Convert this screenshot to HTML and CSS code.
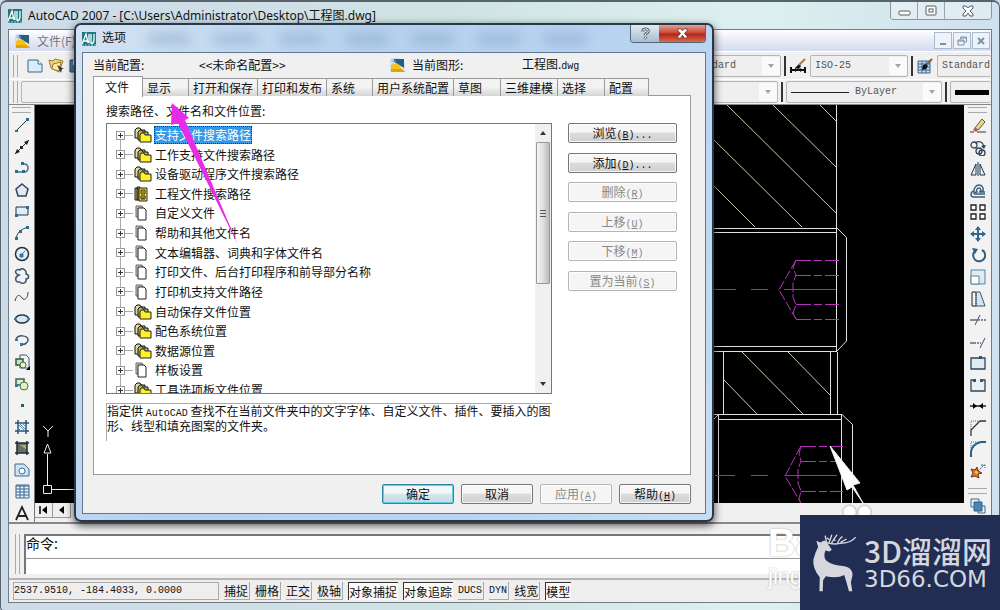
FILE: index.html
```html
<!DOCTYPE html>
<html lang="zh-CN">
<head>
<meta charset="utf-8">
<meta name="viewport" content="width=device-width, initial-scale=1">
<title>AutoCAD 2007 - 工程图.dwg</title>
<link rel="stylesheet" href="styles.css">
</head>
<body>
<svg class="sprites" aria-hidden="true">
  <defs>
    <symbol id="app" viewBox="0 0 14 14"><rect width="14" height="14" fill="#1d7a80"/><path d="M0 12 4 2l2 9M1 9h5M7 2v9M9 2v10M12 2v6q0 3-3 4" fill="none" stroke="#fff" stroke-width="1.3"/><path d="M0 13h14" stroke="#8fd3d0" stroke-dasharray="2 1"/></symbol>
    <symbol id="dwg" viewBox="0 0 16 16"><path d="M1 2h8l5 4v8H1z" fill="#fff" stroke="#a8b4bd" stroke-width=".6"/><path d="M4 2h10v9L4 5z" fill="#265f83"/><path d="M1 8q6-4 9 1l5 6H1z" fill="#f4c21a"/><path d="M1 12h10l4 3H1z" fill="#e2a400"/><path d="M3 2v5M1 4h5" stroke="#78b8dc"/></symbol>
    <symbol id="folders" viewBox="0 0 18 16"><path d="M1 11V3l2-2h3l1 2h4v8z" fill="#dedb9c" stroke="#111"/><path d="M4 13V5l2-2h2l1 2h5v8z" fill="#bdb75b" stroke="#111"/><path d="M6 15V8l1-2h3l1 2h6v7z" fill="#fff02c" stroke="#222"/></symbol>
    <symbol id="pages" viewBox="0 0 18 16"><path d="M2 12V1h6l1 2v9z" fill="#ccc" stroke="#666"/><path d="M4 15V3h6l2 2v10z" fill="#fff" stroke="#222"/></symbol>
    <symbol id="cabinet" viewBox="0 0 18 16"><path d="M1 2h3v12H1zM3 1h3v13H3z" fill="#c9b837" stroke="#222"/><path d="M5 2h8v13H5z" fill="#f7e43c" stroke="#222"/><path d="M7 4h4v4H7zm0 6h4v3H7zM8 6h2m-2 6h2" fill="none" stroke="#222"/></symbol>
    <symbol id="down" viewBox="0 0 8 6"><path d="M1 1h6L4 5z" fill="#a4a4a4"/></symbol>
  </defs>
</svg>

<main class="window">
  <header class="titlebar">
    <svg class="i14"><use href="#app"/></svg>
    <h1>AutoCAD 2007 - [C:\Users\Administrator\Desktop\工程图.dwg]</h1>
    <div class="caption-buttons">
      <button aria-label="最小化"><svg viewBox="0 0 14 12"><rect x="2" y="6" width="11" height="4" rx="1" fill="#fff" stroke="#565d62"/></svg></button>
      <button aria-label="还原"><svg viewBox="0 0 14 12"><rect x="2" y="1" width="10" height="9" rx="1" fill="#fff" stroke="#565d62"/><rect x="5" y="4" width="4" height="3" fill="#fff" stroke="#565d62"/></svg></button>
      <button class="wide" aria-label="关闭"><svg viewBox="0 0 14 12"><path d="M2 1h3l2 2 2-2h3v2L9 6l3 3v2H9L7 8l-2 3H2V9l3-3-3-3z" fill="#fff" stroke="#565d62"/></svg></button>
    </div>
  </header>

  <div class="client">
    <nav class="menubar">
      <svg class="i16"><use href="#dwg"/></svg>
      <a href="#file">文件(F)</a>
      <div class="doc-buttons">
        <button aria-label="最小化图形"><svg viewBox="0 0 12 12"><path d="M3 9h6" stroke="#7c92a8" stroke-width="2"/></svg></button>
        <button aria-label="还原图形"><svg viewBox="0 0 12 12"><path d="M4.500 4V2h6v5H8M2 5h6v5H2zM2 6h6M5 3h5" fill="none" stroke="#7c92a8"/></svg></button>
        <button aria-label="关闭图形"><svg viewBox="0 0 12 12"><path d="m3 3 6 6m0-6L3 9" stroke="#7c92a8" stroke-width="2"/></svg></button>
      </div>
    </nav>

    <div class="toolbar first">
      <span class="grip"></span>
      <button class="tool" aria-label="新建"><svg viewBox="0 0 16 16"><path d="M1 2h10l4 4v8H1z" fill="#d7edf8" stroke="#406682"/><path d="M11 2v4h4" fill="#fff" stroke="#406682"/></svg></button>
      <button class="tool" aria-label="打开"><svg viewBox="0 0 16 16"><path d="m1 2 4 1 2-2 8 2-4 11-8-4z" fill="#f3d37a" stroke="#9b7a2c"/><path d="m5 6 8-2-2 9-7-2z" fill="#ffe9a6" stroke="#9b7a2c"/><path d="m9 7 4 8 1-4 2 0z" fill="#334"/></svg></button>
      <button class="tool" aria-label="保存"><svg viewBox="0 0 16 16"><path d="M1 2h13v12H1z" fill="#4f7d9e" stroke="#264a64"/><path d="M4 2h7v5H4z" fill="#e8f2f8"/></svg></button>
      <div class="combo text-style"><select aria-label="文字样式"><option>Standard</option></select><svg class="arrow"><use href="#down"/></svg></div>
      <span class="bar"></span>
      <button class="tool" aria-label="标注样式"><svg viewBox="0 0 16 16"><path d="M1 9v6m14-6v6M1 12h14" stroke="#111" stroke-width="2"/><path d="m3 12 3-2v4zm10 0-3-2v4zM5 10l4-4 2 2-2 3z" fill="#111"/><path d="m9 7 6-6" stroke="#a47a4b" stroke-width="2"/></svg></button>
      <div class="combo dim-style"><select aria-label="标注样式列表"><option>ISO-25</option></select><svg class="arrow"><use href="#down"/></svg></div>
      <span class="bar"></span>
      <button class="tool" aria-label="表格样式"><svg viewBox="0 0 16 16"><path d="M1 3h12v12H1z" fill="#c5dcf3" stroke="#3e6591"/><path d="M1 6h12M1 9h12M1 12h12M5 3v12M9 3v12" stroke="#3e6591"/><path d="m5 12 1-5 3-1 2 2-2 3z" fill="#111"/><path d="m10 6 5-5" stroke="#865f35" stroke-width="2"/></svg></button>
      <div class="combo table-style"><select aria-label="表格样式列表"><option>Standard</option></select></div>
    </div>

    <div class="toolbar second">
      <span class="grip"></span>
      <div class="combo layers"><select aria-label="图层"><option></option></select><svg class="arrow"><use href="#down"/></svg></div>
      <span class="bar"></span>
      <div class="combo linetype"><span class="line"></span><select aria-label="线型"><option>ByLayer</option></select><svg class="arrow"><use href="#down"/></svg></div>
      <span class="bar"></span>
      <div class="combo weight"><span class="thick"></span></div>
    </div>

    <div class="workspace">
      <aside class="tools left">
        <span class="grip-h"></span>
        <div class="tool-list">
          <button aria-label="直线"><svg viewBox="0 0 16 16"><path d="m2 14 12-12" stroke="#234"/><path d="M1 13h3v2H1zM12 1h3v3h-3z" fill="#2b6b8d"/></svg></button>
          <button aria-label="构造线"><svg viewBox="0 0 16 16"><path d="M1 15 15 1" stroke="#222"/><path d="m1 15 2-5 3 3zM15 1l-5 2 3 3zM6 7h3v3H6z" fill="#222"/></svg></button>
          <button aria-label="多段线"><svg viewBox="0 0 16 16"><path d="M2 12h8q4 0 4-4t-4-4H8" fill="none" stroke="#4b7288" stroke-width="1.500"/><path d="M1 10h3v3H1zM8 10h3v3H8zM7 2h3v3H7z" fill="#2b6b8d"/></svg></button>
          <button aria-label="正多边形"><svg viewBox="0 0 16 16"><path d="m8 2 6 5-2 7H4L2 7z" fill="#dcebf5" stroke="#345" stroke-width="1.500"/></svg></button>
          <button aria-label="矩形"><svg viewBox="0 0 16 16"><path d="M2 4h12v8H2z" fill="#e0edf5" stroke="#234"/><path d="M1 11h3v3H1zM12 3h3v3h-3z" fill="#2b6b8d"/></svg></button>
          <button aria-label="圆弧"><svg viewBox="0 0 16 16"><path d="M2 14Q3 5 14 2" fill="none" stroke="#345"/><path d="M1 12h3v3H1zM5 5h3v3H5zM12 1h3v3h-3z" fill="#2b6b8d"/></svg></button>
          <button aria-label="圆"><svg viewBox="0 0 16 16"><circle cx="8" cy="8" r="6.500" fill="#e3f0fa" stroke="#234" stroke-width="1.500"/><path d="m7 9 4-4M6 8h3v3H6z" fill="#287ca7" stroke="#287ca7"/></svg></button>
          <button aria-label="修订云线"><svg viewBox="0 0 16 16"><path d="M5 7C-1 5 2 0 6 2c2-3 7 0 6 4 4 1 3 5 0 5 1 5-5 5-6 3-5 1-6-5-1-7z" fill="#eef5fa" stroke="#456" stroke-width="1.500"/></svg></button>
          <button aria-label="样条曲线"><svg viewBox="0 0 16 16"><path d="M1 12c2-8 5-6 7-3s6 1 6-6" fill="none" stroke="#345"/></svg></button>
          <button aria-label="椭圆"><svg viewBox="0 0 16 16"><ellipse cx="8" cy="8" rx="6.500" ry="4" fill="#d8e8f3" stroke="#234" stroke-width="1.500"/><path d="M7 3h2v2H7zM0 7h2v2H0zM14 7h2v2h-2z" fill="#287ca7"/></svg></button>
          <button aria-label="椭圆弧"><svg viewBox="0 0 16 16"><path d="M2 8c0-6 13-5 12 0 0 3-4 5-6 4" fill="none" stroke="#456" stroke-width="1.500"/><path d="M1 7h3v2H1zM6 11h3v3H6z" fill="#287ca7"/></svg></button>
          <button aria-label="插入块"><svg viewBox="0 0 16 16"><path d="M6 1h6l3 3v10H6z" fill="#edf5fa" stroke="#456"/><path d="M2 5h7v6H2z" fill="#c9e0d0" stroke="#285b36" stroke-width="1.500"/><circle cx="9" cy="11" r="3" fill="#e6f2d9" stroke="#456b25"/><path d="M16 12v4h-4z" fill="#000"/></svg></button>
          <button aria-label="创建块"><svg viewBox="0 0 16 16"><path d="M2 3h8v6H2z" fill="#d8e8de" stroke="#3b6745" stroke-width="1.500"/><circle cx="10" cy="10" r="4" fill="#e2edc9" stroke="#547634"/><path d="M1 8h3v3H1z" fill="#287ca7"/></svg></button>
          <button aria-label="点"><svg viewBox="0 0 16 16"><path d="M7 7h3v3H7z" fill="#245c7d"/></svg></button>
          <button aria-label="图案填充"><svg viewBox="0 0 16 16"><path d="M4 1v14M12 1v14M1 4h14M1 12h14" stroke="#285275" stroke-width="1.500"/><path d="m4 5 7 7M5 4l7 7M4 9l3 3M8 4l4 4" stroke="#638ead"/></svg></button>
          <button aria-label="渐变色"><svg viewBox="0 0 16 16"><path d="M3 3h10v10H3z" fill="#66705f"/><path d="M6 5h7v5z" fill="#b5a969"/><path d="M3 1v14M13 1v14M1 3h14M1 13h14" stroke="#192b3b" stroke-width="1.500"/></svg></button>
          <button aria-label="面域"><svg viewBox="0 0 16 16"><path d="M1 2h9l5 5v7H1z" fill="#cfe5f5" stroke="#3e6f91"/><circle cx="8" cy="9" r="3" fill="#fff" stroke="#3e6f91"/></svg></button>
          <button aria-label="表格"><svg viewBox="0 0 16 16"><path d="M2 2h13v13H2z" fill="#e5f1fb" stroke="#3b6791"/><path d="M2 3h13M2 6h13M2 9h13M2 12h13M6 2v13M10 2v13" stroke="#3b6791"/></svg></button>
          <button aria-label="多行文字"><svg viewBox="0 0 16 16"><path d="M2 15 8 2l6 13M4 11h8" fill="none" stroke="#222" stroke-width="1.800"/></svg></button>
        </div>
      </aside>

      <section class="drawing">
        <svg class="model" role="img" aria-label="工程图">
          <g transform="translate(-35 -105)" fill="none">
            <path d="m727 105 110 109M773 105l64 63M820 105l17 17M713 139l89 88M713 185l42 42M742 352l61 62M788 352l42 43M724 380l33 34" stroke="#c9c9a8"/>
            <path d="M713 228.500h124M713 232.500h124M836.500 105v246M837 228l9.500 9.500V341l-9.500 10M713 346.500h124M713 351.500h124M723.500 352v62M830.500 352v62M837.500 352v62M713 414.500h129l10.500 10V503M718 419.500h124M841.500 415v88M718.500 415v88M713 420l6-6" stroke="#e1e1e1"/>
            <path d="M796 260.500h43M796 275.500h43M796 304.500h43M796 319.500h43M801 446.500h42M801 461.500h42M801 491.500h42" stroke="#b633bd" stroke-dasharray="15 3 8 3"/>
            <path d="m796 260-17 30 17 29M796 260l-3 8 3 7-3 8v14l3 8-3 8 3 6M801 446l-16 30 16 27M801 446l-2 8 2 7-3 8v14l3 8-2 8 2 4" stroke="#b633bd" stroke-dasharray="10 2"/>
            <path d="M713 289.500h23m15 0h17m16 0h52M715 475.500h20m16 0h17m17 0h52" stroke="#e0282c"/>
            <path d="m830 446 30 37-7 2 10 18-11-16-5 3z" fill="#fff" stroke="#eee"/>
            <path d="m43 426 5 5 5-5M48 431v6M47.500 454v31M51 489.500h24M43.500 485.500h8v8h-8zM44 453l3.500-9 3.500 9z" stroke="#eee"/>
          </g>
        </svg>
        <div class="sheet-tabs">
          <button aria-label="第一个"><svg viewBox="0 0 10 10"><path d="M1 1v8" stroke="#000" stroke-width="1.500"/><path d="M8 1v8L3 5z"/></svg></button>
          <button aria-label="上一个"><svg viewBox="0 0 10 10"><path d="M7 1v8L2 5z"/></svg></button>
        </div>
      </section>

      <aside class="tools right">
        <span class="grip-h"></span>
        <div class="tool-list">
          <button aria-label="删除"><svg viewBox="0 0 16 16"><path d="m5 10 7-9 3 3-7 8z" fill="#e7df73" stroke="#555"/><path d="m3 12 2-3 3 3-2 2z" fill="#b85a59"/><path d="M0 14h4m3 0h9" stroke="#333"/></svg></button>
          <button aria-label="复制"><svg viewBox="0 0 16 16"><g fill="none" stroke="#345" stroke-width="1.300"><circle cx="4" cy="5" r="3"/><circle cx="9" cy="11" r="3"/><circle cx="12" cy="13" r="3"/><path d="M5 3q7-4 9 4"/></g><path d="m11 6 5-1-2 4z" fill="#245"/></svg></button>
          <button aria-label="镜像"><svg viewBox="0 0 16 16"><path d="M6 3v11H1zM10 3v11h5z" fill="#e6f0f5" stroke="#234"/><path d="M8 1v14" stroke="#4e7b98" stroke-width="1.500"/></svg></button>
          <button aria-label="偏移"><svg viewBox="0 0 16 16"><path d="M15 14H4c-4 0-4-5 0-6 0-3 2-6 5-6s5 3 4 6h-2M15 11H5c-2 0-1-2 2-2-1-2 0-4 2-4s2 2 1 4l-1 0h6" fill="none" stroke="#3a617e" stroke-width="1.400"/></svg></button>
          <button aria-label="阵列"><svg viewBox="0 0 16 16"><path d="M1 1h5v5H1zM10 1h5v5h-5zM1 10h5v5H1zM10 10h5v5h-5z" fill="#fff" stroke="#222" stroke-width="1.300"/></svg></button>
          <button aria-label="移动"><svg viewBox="0 0 16 16"><path d="M8 1v14M1 8h14" stroke="#2f6689" stroke-width="2"/><path d="m8 0 3 4H5zm0 16 3-4H5zM0 8l4-3v6zm16 0-4-3v6z" fill="#2f6689"/></svg></button>
          <button aria-label="旋转"><svg viewBox="0 0 16 16"><path d="M5 4a6 6 0 1 0 7-1" fill="none" stroke="#315e7c" stroke-width="2"/><path d="m2 1 6 1-3 5z" fill="#315e7c"/></svg></button>
          <button aria-label="缩放"><svg viewBox="0 0 16 16"><path d="M1 1h14v14H1z" fill="#dcebf4" stroke="#5a8099"/><path d="M1 7h8v8H1z" fill="#fff" stroke="#5a8099"/></svg></button>
          <button aria-label="拉伸"><svg viewBox="0 0 16 16"><path d="M6 1h4l5 14H6z" fill="#d2e5f0" stroke="#456"/><path d="M6 1H2v14h4" fill="none" stroke="#222"/><path d="M6 2v13" stroke="#222" stroke-dasharray="1 1"/></svg></button>
          <button aria-label="修剪"><svg viewBox="0 0 16 16"><path d="M0 8h7" stroke="#222"/><path d="M8 8h8" stroke="#222" stroke-dasharray="2 1"/><path d="m5 13 5-10" stroke="#448"/></svg></button>
          <button aria-label="延伸"><svg viewBox="0 0 16 16"><path d="M0 9h4" stroke="#222"/><path d="M4 9h7" stroke="#222" stroke-dasharray="2 1"/><path d="m10 14 5-10" stroke="#357"/></svg></button>
          <button aria-label="打断于点"><svg viewBox="0 0 16 16"><path d="M1 3h14v11H1z" fill="#deebf2" stroke="#345" stroke-width="1.300"/><path d="M9 1h3v3H9z" fill="#357"/></svg></button>
          <button aria-label="打断"><svg viewBox="0 0 16 16"><path d="M5 3H1v11h14V3h-4" fill="#e8f0f4" stroke="#345" stroke-width="1.300"/><path d="M3 2h3v3H3zM10 2h3v3h-3z" fill="#357"/></svg></button>
          <button aria-label="合并"><svg viewBox="0 0 16 16"><path d="M0 8h16" stroke="#222" stroke-width="1.500"/><path d="m7 8-4-3v6zm2 0 4-3v6z"/></svg></button>
          <button aria-label="倒角"><svg viewBox="0 0 16 16"><path d="M1 16v-6l9-9h6" fill="none" stroke="#333" stroke-width="1.300"/><path d="M1 9V1h8" fill="none" stroke="#468" stroke-dasharray="1 1"/></svg></button>
          <button aria-label="圆角"><svg viewBox="0 0 16 16"><path d="M1 16v-5Q2 3 11 1h5" fill="none" stroke="#286087" stroke-width="2"/><path d="M1 9V1h8" fill="none" stroke="#468" stroke-dasharray="1 1"/></svg></button>
          <button aria-label="分解"><svg viewBox="0 0 16 16"><path d="m1 6 4 1 2-3 1 4 4 2-4 1 1 4-4-2-4 1 2-4z" fill="#df7929" stroke="#6e321d"/><path d="m8 8 6-6M11 2h4v3" stroke="#335b7c" fill="none" stroke-dasharray="2 1"/><path d="m4 9 3-1 1 3z" fill="#ffd75b"/></svg></button>
        </div>
        <span class="grip-h"></span>
        <button aria-label="绘图次序"><svg viewBox="0 0 16 16"><path d="M1 1h8v8H1zM8 8h7v7H8z" fill="#e5f1f8" stroke="#3a6a91"/><path d="M4 4h8v9H4z" fill="#4d84b2" stroke="#315f86"/></svg></button>
      </aside>
    </div>

    <section class="command">
      <span class="grip"></span>
      <div class="command-box">
        <label for="cmd">命令:</label>
        <input id="cmd" type="text">
      </div>
    </section>

    <footer class="status">
      <output>2537.9510, -184.4033, 0.0000</output>
      <button>捕捉</button><button>栅格</button><button>正交</button><button>极轴</button><button class="on">对象捕捉</button><button class="on">对象追踪</button><button class="mono">DUCS</button><button class="mono">DYN</button><button>线宽</button><button class="on">模型</button>
    </footer>
  </div>
</main>

<section class="dialog" role="dialog" aria-labelledby="dlg-title">
  <header class="dialog-title">
    <svg class="i14"><use href="#app"/></svg>
    <h2 id="dlg-title">选项</h2>
    <div class="glass" aria-hidden="true"><i></i><i></i><i></i><i></i><i></i><i></i><i></i></div>
    <div class="dialog-controls">
      <button aria-label="帮助"><svg viewBox="0 0 14 14"><path d="M4 5q0-3 3-3t3 2.500Q10 6 7 7.500V9" fill="none" stroke="#56616b" stroke-width="3"/><path d="M4 5q0-3 3-3t3 2.500Q10 6 7 7.500V9" fill="none" stroke="#fff"/><circle cx="7" cy="11.500" r="1.300" fill="#fff" stroke="#56616b"/></svg></button>
      <button class="close" aria-label="关闭"><svg viewBox="0 0 14 12"><path d="M2 1h3l2 2 2-2h3v2L9 6l3 3v2H9L7 8l-2 3H2V9l3-3-3-3z" fill="#fff" stroke="#733"/></svg></button>
    </div>
  </header>
  <div class="dialog-body">
    <div class="profile">
      <span>当前配置:</span><span>&lt;&lt;未命名配置&gt;&gt;</span>
      <svg class="i16"><use href="#dwg"/></svg><span>当前图形:</span><span>工程图.<b class="lat">dwg</b></span>
    </div>
    <div class="tabs" role="tablist">
      <button role="tab" aria-selected="true" class="active">文件</button><button role="tab">显示</button><button role="tab">打开和保存</button><button role="tab">打印和发布</button><button role="tab">系统</button><button role="tab">用户系统配置</button><button role="tab">草图</button><button role="tab">三维建模</button><button role="tab">选择</button><button role="tab">配置</button>
    </div>
    <div class="page" role="tabpanel">
      <h3>搜索路径、文件名和文件位置:</h3>
      <div class="columns">
        <div class="tree-side">
          <div class="tree-box">
            <ul class="tree">
              <li><i class="plus"></i><svg><use href="#folders"/></svg><span class="selected">支持文件搜索路径</span></li>
              <li><i class="plus"></i><svg><use href="#folders"/></svg><span>工作支持文件搜索路径</span></li>
              <li><i class="plus"></i><svg><use href="#folders"/></svg><span>设备驱动程序文件搜索路径</span></li>
              <li><i class="plus"></i><svg><use href="#cabinet"/></svg><span>工程文件搜索路径</span></li>
              <li><i class="plus"></i><svg><use href="#pages"/></svg><span>自定义文件</span></li>
              <li><i class="plus"></i><svg><use href="#pages"/></svg><span>帮助和其他文件名</span></li>
              <li><i class="plus"></i><svg><use href="#pages"/></svg><span>文本编辑器、词典和字体文件名</span></li>
              <li><i class="plus"></i><svg><use href="#pages"/></svg><span>打印文件、后台打印程序和前导部分名称</span></li>
              <li><i class="plus"></i><svg><use href="#pages"/></svg><span>打印机支持文件路径</span></li>
              <li><i class="plus"></i><svg><use href="#folders"/></svg><span>自动保存文件位置</span></li>
              <li><i class="plus"></i><svg><use href="#folders"/></svg><span>配色系统位置</span></li>
              <li><i class="plus"></i><svg><use href="#folders"/></svg><span>数据源位置</span></li>
              <li><i class="plus"></i><svg><use href="#pages"/></svg><span>样板设置</span></li>
              <li><i class="plus"></i><svg><use href="#folders"/></svg><span>工具选项板文件位置</span></li>
            </ul>
            <div class="scroll">
              <svg viewBox="0 0 8 6"><path d="M1 5h6L4 1z" fill="#333"/></svg>
              <span class="thumb"></span>
              <span class="track"></span>
              <svg viewBox="0 0 8 6"><path d="M1 1h6L4 5z" fill="#333"/></svg>
            </div>
          </div>
          <p class="hint">指定供 <span class="lat">AutoCAD</span> 查找不在当前文件夹中的文字字体、自定义文件、插件、要插入的图形、线型和填充图案的文件夹。</p>
        </div>
        <div class="actions">
          <button class="btn">浏览<span class="lat">(<u>B</u>)...</span></button>
          <button class="btn">添加<span class="lat">(<u>D</u>)...</span></button>
          <button class="btn" disabled>删除<span class="lat">(<u>R</u>)</span></button>
          <button class="btn" disabled>上移<span class="lat">(<u>U</u>)</span></button>
          <button class="btn" disabled>下移<span class="lat">(<u>M</u>)</span></button>
          <button class="btn" disabled>置为当前<span class="lat">(<u>S</u>)</span></button>
        </div>
      </div>
    </div>
    <div class="dialog-buttons">
      <button class="btn default">确定</button>
      <button class="btn">取消</button>
      <button class="btn" disabled>应用<span class="lat">(<u>A</u>)</span></button>
      <button class="btn">帮助<span class="lat">(<u>H</u>)</span></button>
    </div>
  </div>
</section>

<svg class="pointer" viewBox="0 0 70 146" aria-hidden="true"><path d="M2 2 19 17l-4 2 53 125L8 22l-7 2z" fill="#e62ce6"/></svg>

<div class="baidu" aria-hidden="true"><span class="paws"></span><b>Bai</b><span>jingyan</span></div>
<aside class="brand">
  <svg viewBox="930 95 140 185" aria-hidden="true"><path d="m946 121 12 5 9-5 13 9 12 18-7 5-12-3q-8 18 3 31 17 14 53 16 24 4 25 26l-5 22 4 27h-10l-7-26-7-23q-20 12-55 4l-8 12-1 33h-10l1-42q-22-26-19-53 6-22 14-37z" fill="#d6d7dc"/><path d="M968 122q22 13 48 7 34-1 47-19M976 124l-4-18M984 127l8-24M991 128q10-16 17-25M1008 131q7-18 16-22M985 118l-8-6M998 117l5 4M1018 126l18-10" fill="none" stroke="#d6d7dc" stroke-width="4"/></svg>
  <div><strong>3D溜溜网</strong><span>3D66.COM</span></div>
</aside>
</body>
</html>
```
FILE: styles.css
```css
* { box-sizing: border-box; }
body {
  margin: 0;
  font: 12px/16px "Noto Sans CJK SC", sans-serif;
  color: #111;
  background: #cfdbe8;
}
h1, h2, h3, p, ul { margin: 0; padding: 0; font-size: 12px; font-weight: 400; }
button { margin: 0; padding: 0; border: 0; background: none; font: inherit; color: inherit; }
svg { display: block; flex: none; }
.sprites { position: absolute; width: 0; height: 0; }
.i14 { width: 14px; height: 14px; }
.i16 { width: 16px; height: 16px; }
.lat, .mono { font-family: "Liberation Mono", monospace; font-size: 10px; font-weight: 400; }
.lat { line-height: 10px; }

/* Application window */
.window {
  display: flex;
  flex-direction: column;
  min-height: 100vh;
  padding: 0 7px 7px;
  border: 1px solid #59636b;
  border-top-width: 2px;
  border-radius: 7px 7px 4px 4px;
  background: linear-gradient(90deg, #cddbe9, #cfe3e4 45%, #dcf1ef 75%, #cfe0ee);
}
.titlebar { display: flex; align-items: center; height: 27px; gap: 6px; }
.titlebar h1 { font-family: "Noto Sans", "Noto Sans CJK SC", sans-serif; }
.caption-buttons { display: flex; align-self: flex-start; margin-left: auto; border: 1px solid #8b979e; border-top: 0; border-radius: 0 0 4px 4px; }
.caption-buttons button { width: 27px; height: 17px; display: grid; place-items: center; border-right: 1px solid #9aa6ad; background: #ffffff55; }
.caption-buttons svg { width: 14px; height: 12px; }
.caption-buttons .wide { width: 46px; border: 0; }
.client { flex: 1; display: flex; flex-direction: column; border: 1px solid #717b83; background: #f0f0f0; }
.menubar { display: flex; align-items: center; height: 21px; padding: 0 1px 0 6px; gap: 6px; background: linear-gradient(#fff, #e3e7f6 60%, #d5dbef); }
.menubar a { color: #777; text-decoration: none; line-height: 14px; }
.doc-buttons { display: flex; gap: 1px; margin-left: auto; }
.doc-buttons button { width: 18px; height: 17px; display: grid; place-items: center; border: 1px solid #a9bccc; background: #eef3fa; }
.doc-buttons svg { width: 12px; height: 12px; }

.toolbar { display: flex; align-items: center; gap: 3px; padding-left: 4px; border-top: 1px solid #fff; }
.toolbar.first { height: 28px; }
.toolbar.second { height: 26px; border-bottom: 1px solid #888; }
.grip { width: 5px; height: 22px; border: 1px solid #aaa; border-width: 0 1px; flex: none; }
.tool { width: 18px; height: 20px; display: grid; place-items: center; flex: none; }
.first > .grip { margin-right: 5px; }
.tool svg { width: 16px; height: 16px; }
.bar { width: 2px; height: 20px; background: #333; flex: none; }
.combo { display: flex; align-items: center; height: 22px; border: 1px solid #b5b5b5; border-radius: 2px; background: #efefef; padding-left: 4px; overflow: hidden; flex: none; }
.combo select { appearance: none; flex: 1; min-width: 0; padding: 0; border: 0; background: none; font: 10px/16px "Liberation Mono", monospace; color: #555; }
.arrow { width: 18px; height: 18px; padding: 6px 4px; background: #fafafa; }
.text-style { width: 98px; margin-left: auto; }
.dim-style { width: 98px; }
.table-style { width: 54px; border-right: 0; }
.layers { flex: 1; }
.linetype { width: 156px; gap: 6px; }
.line { width: 58px; height: 1px; background: #222; }
.weight { width: 41px; border-right: 0; }
.thick { width: 34px; height: 5px; background: #000; }

.workspace { flex: 1; display: flex; min-height: 417px; }
.tools { display: flex; flex-direction: column; align-items: center; width: 25px; background: #f2f2f2; }
.tools.right { width: 27px; }
.grip-h { width: 19px; height: 6px; margin-top: 2px; border: 1px solid #aaa; border-width: 1px 0; flex: none; }
.tool-list { display: flex; flex-direction: column; justify-content: space-between; }
.left .tool-list { height: 404px; margin-top: 4px; }
.right .tool-list { height: 361px; margin: 5px 0 7px; }
.tools button, .tools svg { width: 16px; height: 16px; }
.right > button { margin-top: 4px; }
.drawing { flex: 1; display: flex; flex-direction: column; min-width: 0; border-left: 1px solid #777; }
.model { width: 100%; height: 398px; background: #000; }
.sheet-tabs { display: flex; height: 15px; }
.sheet-tabs button { width: 18px; display: grid; place-items: center; border: 1px solid #999; border-width: 0 1px 1px 0; }
.sheet-tabs svg { width: 10px; height: 10px; }

.command { display: flex; height: 56px; padding: 10px 0 4px 6px; gap: 4px; border-top: 2px solid #888; }
.command .grip { height: 40px; }
.command-box { flex: 1; border: 2px solid #777; border-width: 2px 0 0 2px; background: #fff; font-size: 14px; }
.command-box label { display: block; height: 23px; line-height: 14px; border-bottom: 1px solid #999; }
.command-box input { display: block; width: 100%; height: 16px; padding: 0; border: 0; outline: 0; background: none; }
.status { display: flex; align-items: center; gap: 5px; height: 24px; padding: 2px 4px; border-top: 2px solid #b5b5b5; background: #efeeed; }
.status output { width: 206px; height: 18px; border: 1px solid #aaa; font: 10px/16px "Liberation Mono", monospace; }
.status button { height: 18px; padding: 0 1px 0 0; border: 1px solid #aaa; border-width: 0 1px 1px 0; line-height: 17px; }
.status .on { border-color: #333; border-width: 1px 0 0 1px; background: #fafafa; }

/* Options dialog */
.dialog {
  position: absolute;
  left: 74px;
  top: 23px;
  width: 640px;
  padding: 0 6px 6px;
  border: 2px solid #26394b;
  border-radius: 7px;
  background: linear-gradient(115deg, #d3e3f3, #b7d2ef 35%, #b9d3f2 70%, #c9ddf1);
  box-shadow: 0 3px 8px #000b;
}
.dialog-title { display: flex; align-items: center; height: 27px; gap: 6px; }
.dialog-title h2 { line-height: 14px; margin-bottom: 3px; }
.glass { flex: 1; display: flex; gap: 24px; padding-left: 16px; filter: blur(6px); }
.glass i { width: 42px; height: 10px; background: #7998bd77; }
.dialog-controls { display: flex; align-self: flex-start; border: 1px solid #566572; border-top: 0; border-radius: 0 0 4px 4px; overflow: hidden; }
.dialog-controls button { width: 28px; height: 17px; display: grid; place-items: center; background: linear-gradient(#e2e9f2, #a8bdd4); }
.dialog-controls svg { width: 13px; height: 13px; }
.dialog-controls .close { width: 46px; background: linear-gradient(#e5a092, #c84432 48%, #ad2419 52%, #dd6a4b); }
.dialog-body { border: 1px solid #60788f; background: #f0f0f0; padding: 0 14px 9px 10px; }
.profile { display: grid; grid-template-columns: 106px 191px 22px 110px auto; align-items: center; height: 23px; line-height: 14px; }
.tabs { display: grid; grid-template-columns: 50px 46px 69px 69px 46px 81px 47px 57px 47px 44px; align-items: end; height: 19px; }
.tabs button { height: 18px; padding: 0 4px; border: 1px solid #999; border-width: 1px 1px 0 0; background: linear-gradient(#f3f3f3 45%, #d5d5d5); text-align: left; white-space: nowrap; line-height: 16px; }
.tabs .active { height: 21px; margin: 0 0 -1px; padding: 0 11px; border-left-width: 1px; background: #fff; position: relative; line-height: 16px; }
.page { height: 380px; padding: 7px 13px 0 12px; border: 1px solid #999; background: #fff; }
.columns { display: flex; gap: 16px; margin-top: 4px; }
.tree-side { flex: 1; min-width: 0; }
.tree-box { display: flex; height: 271px; border: 1px solid #777; overflow: hidden; }
.tree { flex: 1; display: grid; grid-template-rows: repeat(13, minmax(0, 1fr)) 13px; list-style: none; padding: 1px 0 0 7px; overflow: hidden; background: linear-gradient(#aaa, #aaa) 13px 10px / 1px 100% no-repeat; }
.tree li { display: flex; align-items: center; min-height: 0; height: 20px; }
.tree svg { width: 18px; height: 16px; margin: 0 2px 0 1px; }
.tree span { padding: 0 1px; line-height: 18px; white-space: nowrap; }
.tree .selected { background: #3399e8; color: #fff; outline: 1px dotted #333; outline-offset: -1px; }
.plus { width: 17px; height: 9px; margin-left: 2px; background: linear-gradient(#333, #333) 2px 4px / 5px 1px no-repeat, linear-gradient(#333, #333) 4px 2px / 1px 5px no-repeat, linear-gradient(#999, #999) 0 0 / 9px 1px no-repeat, linear-gradient(#999, #999) 0 8px / 9px 1px no-repeat, linear-gradient(#999, #999) 0 0 / 1px 9px no-repeat, linear-gradient(#999, #999) 8px 0 / 1px 9px no-repeat, linear-gradient(#aaa, #aaa) 9px 4px / 8px 1px no-repeat, linear-gradient(#fff, #fff) 0 0 / 9px 9px no-repeat; }
.scroll { width: 16px; display: flex; flex-direction: column; align-items: center; background: #f0f0f0; }
.scroll svg { width: 8px; height: 6px; margin: 6px 0; }
.thumb { width: 14px; height: 142px; border: 1px solid #999; border-radius: 1px; background: linear-gradient(#555, #555) 3px 67px / 6px 1px no-repeat, linear-gradient(#555, #555) 3px 70px / 6px 1px no-repeat, linear-gradient(#555, #555) 3px 73px / 6px 1px no-repeat, linear-gradient(90deg, #f5f5f5, #dedee0 50%, #bbbbc0); }
.track { flex: 1; }
.hint { height: 38px; margin-top: 9px; border: 1px solid #aaa; border-width: 1px 0 0 1px; line-height: 13px; }
.actions { width: 109px; height: 168px; display: flex; flex-direction: column; justify-content: space-between; }
.btn { height: 20px; border: 1px solid #777; border-radius: 2px; background: linear-gradient(#f6f6f6 45%, #dcdcdc 50%, #d0d0d0); box-shadow: inset 0 0 0 1px #fffc; line-height: 16px; }
.btn:disabled { border-color: #b4b4b4; background: #f5f5f5; color: #888; }
.btn.default { border-color: #2e87a4; box-shadow: inset 0 0 0 1px #62cde5; background: linear-gradient(#f0f8fa 45%, #d8e7ec 50%, #c3dbe3); }
.dialog-buttons { display: flex; justify-content: flex-end; gap: 7px; margin-top: 9px; }
.dialog-buttons .btn { width: 72px; }
.pointer { position: absolute; left: 170px; top: 101px; width: 70px; height: 146px; }

/* Image marks */
.baidu { position: absolute; right: 132px; bottom: 18px; width: 100px; color: #fff; line-height: 30px; font-family: "Liberation Sans", sans-serif; text-shadow: 0 0 2px #aaa; }
.baidu b { display: block; font-size: 38px; line-height: 38px; }
.baidu span { display: block; font-size: 22px; }
.baidu .paws { position: absolute; right: -4px; top: -20px; width: 30px; height: 16px; background: radial-gradient(circle, #fff 5px, #ccc 7px, #0000 8px) 0 0 / 15px 16px; }
.brand { position: absolute; right: 0; bottom: 0; width: 200px; height: 95px; display: flex; align-items: center; gap: 6px; padding: 0 9px 0 11px; background: #222d54; color: #d6d7dc; }
.brand > svg { width: 47px; height: 62px; }
.brand strong, .brand span { display: block; white-space: nowrap; }
.brand strong { font-size: 30px; line-height: 32px; font-weight: 500; }
.brand span { font: 23px/26px "DejaVu Sans", sans-serif; }
```
